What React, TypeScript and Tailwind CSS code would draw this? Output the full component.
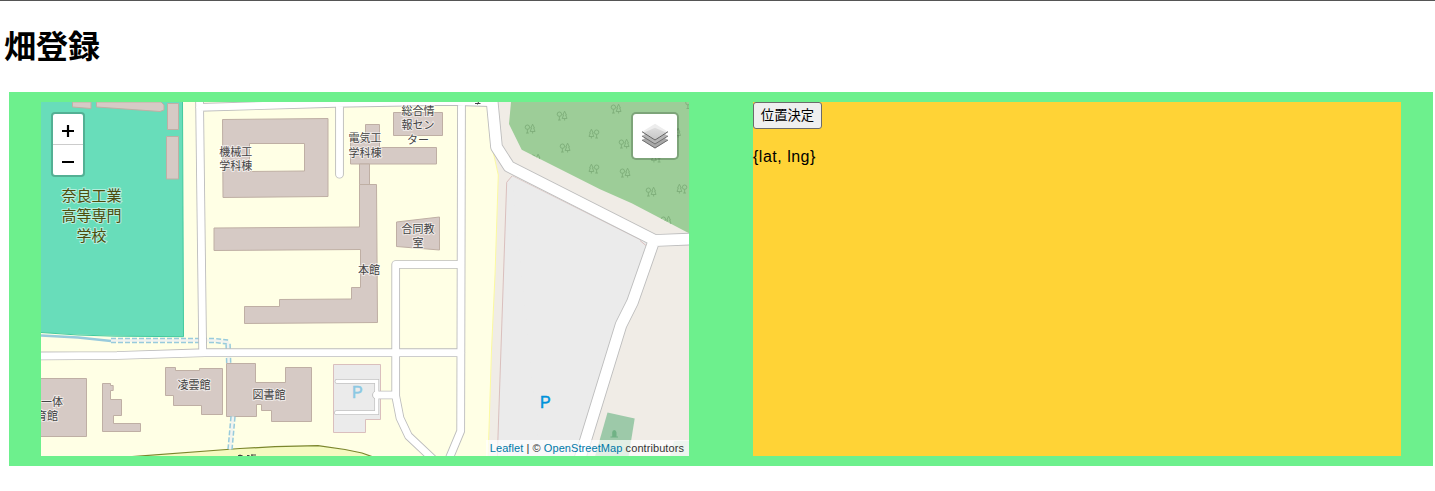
type Point = [number, number];

const trees: { at: Point; flip?: boolean }[] = [
  { at: [530, 128.5] },
  { at: [562, 115.5] },
  { at: [616, 108.5] },
  { at: [594, 133.5], flip: true },
  { at: [565, 147.5] },
  { at: [624, 143.5] },
  { at: [594, 168.5], flip: true },
  { at: [625, 172.5] },
  { at: [651, 191.5] },
  { at: [682, 188.5], flip: true },
  { at: [656.5, 157.5], flip: true },
  { at: [535.5, 158.5] },
  { at: [666, 220.5] },
  { at: [675.5, 132.5] },
  { at: [690.5, 104] },
];

const buildings = [
  "M72.5 102V107L91 108.5V102Z",
  "M96.500 102V107L160 111.500L164 110V105L161 102Z",
  "M167.500 103.500H178.500V129.500H167.500Z",
  "M166.500 136.500H178.500V179H166.500Z",
  "M222.500 119.500L328 118.500V196.500L223 197.500Z",
  "M365.500 124.500H379.500V147.500H436.500V164H350.500V140H365.500Z",
  "M359.500 164H369.500V184.500H359.500Z",
  "M393.500 112.500H442.500V135.500H393.500Z",
  "M359.500 184.500H376.500L377.500 322.500L244.500 323.500V306.500H279.500V299.500L351.500 299V287.500H360.500V249.500L214 250.500V228L359.500 227Z",
  "M396.500 222L439.500 217V250L396.500 246.500Z",
  "M35 378.500H86.500V436.500H35Z",
  "M102.500 383.500H110.500V385.500H113.200V390.500H110.500V399.500H121.500V415.500H113.500V423.500H140.500V431.500H102.500Z",
  "M165.500 367.500H175.500V370.500H199.500V368.500H222.500V414.500H201.500V405.500H173.500V395.500H165.500Z",
  "M226.500 363.500H255.500V382.500H285.500V367.500H311.500V421.500H271.500V410.500H261.500V404.500H256.500V416.500H226.500Z",
];

const lanes =
  "M199.500 96L202.700 353M199.500 107.400L335 103.300L450 101.300L490 102.600M339.500 103V174.200M461.500 101L460.700 431L449 459M37 356L117 355.500L205 352.700H461M461 264.500H395.700V396L400 418L408.500 436L434 460M395.700 395H376.500";
const parkingLanes = "M337 381.400H376.700V412.700H336.500";
const mainRoad =
  "M491.800 98L496.500 147L509 166.500L655 240.500L692 239M654 240.500L632.500 302L621 325L579.500 460";

const labels: { lines: string[]; x: number; y: number; gap: number }[] = [
  { lines: ["機械工", "学科棟"], x: 235.700, y: 155.500, gap: 14.300 },
  { lines: ["電気工", "学科棟"], x: 365, y: 142.300, gap: 14.300 },
  { lines: ["総合情", "報セン", "ター"], x: 418, y: 115, gap: 14.300 },
  { lines: ["合同教", "室"], x: 418, y: 233, gap: 14.300 },
  { lines: ["本館"], x: 369, y: 274, gap: 14 },
  { lines: ["凌雲館"], x: 194, y: 388.500, gap: 14 },
  { lines: ["図書館"], x: 269, y: 399, gap: 14 },
  { lines: ["一体"], x: 52, y: 405.500, gap: 14 },
  { lines: ["育館"], x: 47, y: 420, gap: 14 },
];

function CampusMap() {
  return (
    <svg
      className="block h-full w-full font-['Noto_Sans_CJK_JP',sans-serif]"
      viewBox="41 102 648 354"
      fill="none"
    >
      <defs>
        <clipPath id="forest">
          <path d="M511 102L509 124L521.700 149.700L600 189.300L631.700 203.300L689 233.300V102Z" />
        </clipPath>
      </defs>
      <rect x="41" y="102" width="648" height="354" fill="#f0ece6" />
      <path d="M30 90H490L492 148L494.300 157L498.300 175L495 275L491.500 350L488 460H30Z" fill="#ffffe5" stroke="#fcfaa0" />
      <path d="M41 90H182.500L183.500 336.700L115 335.700L78 334.500L41 332.500Z" fill="#68ddba" />
      <path d="M182.500 102L183.500 336.700L115 336.200L78 335L41 332.500" stroke="#42ca9e" />
      <path d="M511 102L509 124L521.700 149.700L600 189.300L631.700 203.300L689 233.300V102Z" fill="#9dcd98" />
      <g clipPath="url(#forest)" stroke="#7eae79" strokeWidth="0.900">
        {trees.map(({ at: [x, y], flip }) => (
          <g key={`${x}-${y}`} transform={`translate(${x} ${y}) scale(${flip ? -1 : 1} 1)`}>
            <circle cx="-2.600" cy="-1.300" r="2.200" />
            <path d="M-2.600 0.800V4.500M-4 4.500H-1.200M2.600 -4.300L0.800 -0.500H1.500L0.200 3H5L3.700 -0.500H4.400ZM2.600 3V5" />
          </g>
        ))}
      </g>
      <path d="M512 176L506.700 182.300L503.500 275L497.200 460H580L621 325L632.500 302L646 248L640 240Z" fill="#ebebeb" stroke="#dabfbd" />
      <path d="M512 176L640 240L653 243L632.500 302L621 325L580 460H540Z" fill="#ebebeb" />
      <path d="M640 240.500L646.500 246" stroke="#dabfbd" />
      <path d="M333.500 364.500H380.500V419.500H365.500V432.500H333.500Z" fill="#ebebeb" stroke="#dabfbd" />
      <path d="M607.500 412.500L634.700 418.500L628 460H594Z" fill="#9dc9a9" />
      <path d="M674 441H689V456H670Z" fill="#c3ddca" />
      <path d="M610.500 437.500H618V436.500H616.500V432.500Q616.300 430 614.300 430Q612.300 430 612.200 432.500V436.500H610.500Z" fill="#70b285" />

      {buildings.map((d) => (
        <path key={d} d={d} fill="#d6cac5" stroke="#bfafa4" />
      ))}
      <path d="M249.500 143.500H304.500V171L249.500 171.500Z" fill="#ffffe5" stroke="#bfafa4" />

      <path d="M120 457.500L240 448.500L275 446.700L318 445.700L345 449.500L362 453L376 458Z" fill="#f5fac0" stroke="#7b862c" strokeWidth="1.200" />
      <path d="M41 335.500L78 337.500L111 341" stroke="#98cbdc" strokeWidth="2.600" />
      <g strokeWidth="5.500" stroke="#98cbdc">
        <path d="M111 340.500H215L228 342L228.700 363M233 416.500L230 449.500" strokeDasharray="5 2" />
        <path d="M111 340.500H215L228 342L228.700 363M233 416.500L230 449.500" stroke="#f2f3ef" strokeWidth="2.500" />
      </g>

      <path d={lanes} stroke="#bdbdbd" strokeWidth="8.700" strokeLinecap="round" strokeLinejoin="round" />
      <path d={parkingLanes} stroke="#c2c2c2" strokeWidth="4.800" strokeLinecap="round" />
      <path d={mainRoad} stroke="#bdbdbd" strokeWidth="12.600" strokeLinejoin="round" />
      <path d={lanes} stroke="#fff" strokeWidth="6.900" strokeLinecap="round" strokeLinejoin="round" />
      <path d={parkingLanes} stroke="#fff" strokeWidth="3.300" strokeLinecap="round" />
      <path d={mainRoad} stroke="#fff" strokeWidth="10.800" strokeLinejoin="round" />
      <path d="M475 103.500H480.500M478.500 102L477.500 104.500M240 454.500V456M238 455.500H242.500M247 455.500H249.500M252 454.500V456M251 455H256" stroke="#333" strokeWidth="0.900" />

      <g textAnchor="middle" fontSize="11" fill="#444" stroke="#fff" strokeOpacity="0.600" strokeWidth="2" paintOrder="stroke">
        {labels.map(({ lines, x, y, gap }) =>
          lines.map((line, i) => (
            <text key={line} x={x} y={y + i * gap}>
              {line}
            </text>
          )),
        )}
      </g>
      <g textAnchor="middle" fontSize="15" fill="#4d4d0d" stroke="#fff" strokeOpacity="0.500" strokeWidth="2" paintOrder="stroke">
        <text x="91.500" y="201">奈良工業</text>
        <text x="91.500" y="221">高等専門</text>
        <text x="91.500" y="240.700">学校</text>
      </g>
      <g className="font-['Liberation_Sans',sans-serif]" textAnchor="middle" fontSize="16" strokeWidth="0.500">
        <text x="357.300" y="398" fill="#8cc8e3" stroke="#8cc8e3">P</text>
        <text x="545.300" y="408" fill="#0092da" stroke="#0092da">P</text>
      </g>
    </svg>
  );
}

function LayersIcon() {
  return (
    <svg className="size-[26px]" viewBox="0 0 26 26">
      <defs>
        <linearGradient id="sheet" x1="0" y1="0" x2="0" y2="1">
          <stop offset="0" stopColor="#dedede" />
          <stop offset="1" stopColor="#c6c6c6" />
        </linearGradient>
      </defs>
      <path d="M0 17L13 9L26 17L13 25.500Z" fill="#a8a8a8" />
      <path d="M0 17L13 25L26 17" fill="none" stroke="#6d6d6d" />
      <path d="M0 13L13 5L26 13L13 21.500Z" fill="#b5b5b5" />
      <path d="M0 13L13 21L26 13" fill="none" stroke="#6f6f6f" />
      <path d="M0 8.700L13 0.700L26 8.700L13 17Z" fill="#ededed" />
      <path d="M2 9.500L13 4.700L24 9.500L13 16.500Z" fill="url(#sheet)" />
      <path d="M0 8.700L13 17L26 8.700" fill="none" stroke="#606060" />
    </svg>
  );
}

function MapPanel() {
  return (
    <div className="relative h-[354px] w-[648px] overflow-hidden">
      <CampusMap />
      <div className="absolute top-2.5 left-2.5 w-[34px] overflow-hidden rounded border-2 border-black/20 bg-white bg-clip-padding font-['Liberation_Sans',sans-serif]">
        <button className="flex h-[31px] w-full items-center justify-center border-b border-[#ccc]" aria-label="Zoom in">
          <svg className="mt-1 size-3" viewBox="0 0 12 12" stroke="#000" strokeWidth="2.2">
            <path d="M0 6H12M6 0V12" />
          </svg>
        </button>
        <button className="flex h-[30px] w-full items-center justify-center" aria-label="Zoom out">
          <svg className="mt-1 size-3" viewBox="0 0 12 12" stroke="#000" strokeWidth="2.2">
            <path d="M0 6H12" />
          </svg>
        </button>
      </div>
      <button
        className="absolute top-2.5 right-2.5 flex size-12 items-center justify-center rounded-[5px] border-2 border-black/20 bg-white bg-clip-padding"
        aria-label="Layers"
      >
        <LayersIcon />
      </button>
      <div className="absolute right-0 bottom-0 bg-white/70 pr-[5px] pl-1 font-['Liberation_Sans',sans-serif] text-[11px] leading-4 tracking-[0.075px] whitespace-nowrap text-[#333]">
        <span className="text-[#0078a8]">Leaflet</span> | © <span className="text-[#0078a8]">OpenStreetMap</span> contributors
      </div>
    </div>
  );
}

export default function App() {
  return (
    <div className="h-[491px] overflow-hidden border-t border-[#555] bg-white font-['Noto_Sans_CJK_JP',sans-serif] text-black">
      <h1 className="mt-[19px] ml-1 text-[32px] leading-[48px] font-bold">畑登録</h1>
      <main className="mt-6 mr-0.5 ml-[9px] flex h-[374px] items-center justify-around bg-[#6df08d]">
        <MapPanel />
        <section className="h-[354px] w-[648px] bg-[#ffd336]">
          <button className="block h-[27px] w-[69px] rounded-[3px] border border-[#6b6b6b] bg-[#efefef] text-[13.333px] leading-[23px]">
            <span className="block -translate-y-px">位置決定</span>
          </button>
          <p className="mt-4 font-['Liberation_Sans','Noto_Sans_CJK_JP',sans-serif] text-base leading-6 tracking-[0.5px]">{"{lat, lng}"}</p>
        </section>
      </main>
    </div>
  );
}
